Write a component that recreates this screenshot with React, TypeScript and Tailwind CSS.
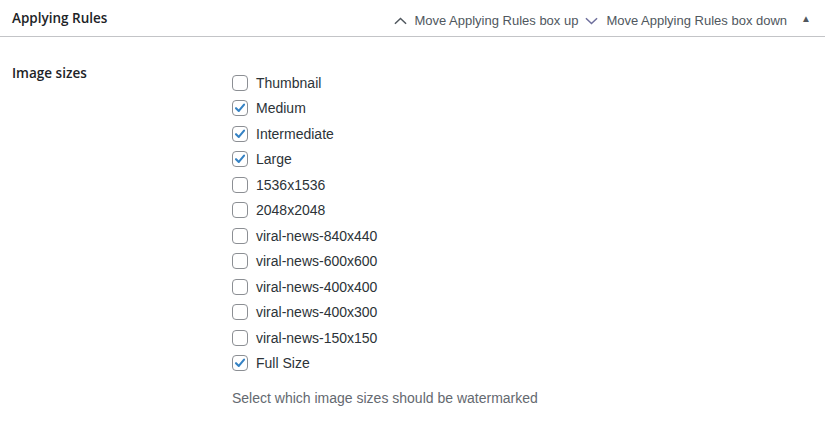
import React from 'react';

const SIZES = [
  { name: 'Thumbnail', on: false },
  { name: 'Medium', on: true },
  { name: 'Intermediate', on: true },
  { name: 'Large', on: true },
  { name: '1536x1536', on: false },
  { name: '2048x2048', on: false },
  { name: 'viral-news-840x440', on: false },
  { name: 'viral-news-600x600', on: false },
  { name: 'viral-news-400x400', on: false },
  { name: 'viral-news-400x300', on: false },
  { name: 'viral-news-150x150', on: false },
  { name: 'Full Size', on: true },
];

function Check({ on }: { on: boolean }) {
  return (
    <span className="flex h-4 w-4 items-center justify-center rounded-[4px] border border-[#8c8f94] bg-white">
      {on ? (
        <svg viewBox="0 0 20 20" className="h-[16px] w-[16px]">
          <path d="M4.3 10.2 L8.3 14.2 L15.8 5.2" fill="none" stroke="#3582c4" strokeWidth="3" strokeLinecap="round" strokeLinejoin="round" />
        </svg>
      ) : null}
    </span>
  );
}

export default function App() {
  return (
    <div className="h-[425px] w-[825px] bg-white font-['Liberation_Sans',sans-serif] text-[#2c3338]">
      <div className="flex h-[37px] items-center border-b border-[#c3c4c7] pl-3 pr-[14px]">
        <h2 className="font-['Open_Sans',sans-serif] text-[13.5px] font-semibold text-[#1d2327]">Applying Rules</h2>
        <div className="ml-auto flex items-center pt-[5px] text-[13px] text-[#50575e]">
          <svg viewBox="0 0 14 8" className="mr-[7px] h-[8px] w-[13px]">
            <path d="M1 7 L7 1.3 L13 7" fill="none" stroke="#50575e" strokeWidth="1.6" />
          </svg>
          <span>Move Applying Rules box up</span>
          <svg viewBox="0 0 14 8" className="ml-[7px] mr-[8px] h-[8px] w-[13px]">
            <path d="M1 1 L7 6.7 L13 1" fill="none" stroke="#6e6f9c" strokeWidth="1.6" />
          </svg>
          <span>Move Applying Rules box down</span>
          <span className="ml-[14px] -mt-[4px] text-[10px] text-[#50575e]">▲</span>
        </div>
      </div>
      <div className="flex">
        <div className="w-[232px] pl-3 pt-[26px] font-['Open_Sans',sans-serif] text-[13.5px] font-semibold leading-5 text-[#1d2327]">Image sizes</div>
        <div className="pt-[33px]">
          {SIZES.map((s) => (
            <label key={s.name} className="flex h-[25.5px] items-center gap-2 text-sm">
              <Check on={s.on} />
              <span>{s.name}</span>
            </label>
          ))}
          <p className="mt-[12px] text-sm leading-5 text-[#646970]">Select which image sizes should be watermarked</p>
        </div>
      </div>
    </div>
  );
}
